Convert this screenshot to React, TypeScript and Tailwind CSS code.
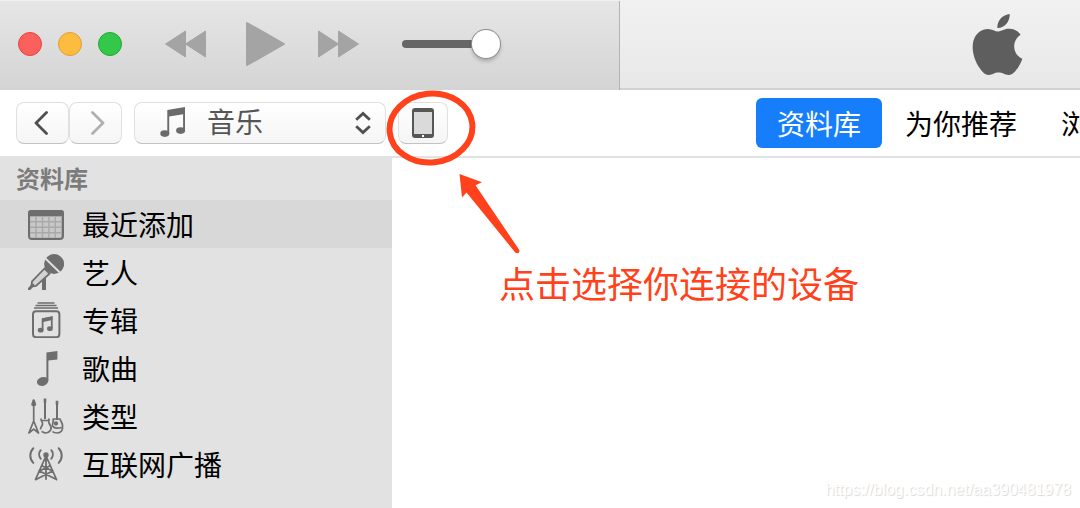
import type { ReactNode } from "react";
import { SiApple } from "react-icons/si";

const RecentIcon = () => (
  <svg viewBox="0 0 36 36" className="size-9" aria-hidden="true">
    <rect x="1" y="5" width="34" height="28" rx="3" fill="#a9a9a9" stroke="#6e6e6e" strokeWidth="2" />
    <path d="M0 10V7a3 3 0 0 1 3-3h30a3 3 0 0 1 3 3v3z" fill="#6e6e6e" />
    {[11, 16.5, 22, 27.5].map((y) =>
      [2.3, 8.8, 15.2, 21.6, 28].map((x) => (
        <rect key={`${x}-${y}`} x={x} y={y} width="5" height="4" fill="#c8c8c8" />
      )),
    )}
  </svg>
);

const ArtistIcon = () => (
  <svg viewBox="0 0 36 36" className="size-9" aria-hidden="true">
    <path d="M14 23.5l4-4V36h-4z" fill="#6e6e6e" />
    <path d="M16.5 14.5L4 27.5l-.6 4.9 4.6-.6L21.5 19.6z" fill="#d3d3d3" stroke="#6e6e6e" strokeWidth="1.8" />
    <path d="M4.8 31.2L1.4 34.8" stroke="#6e6e6e" strokeWidth="3" strokeLinecap="round" />
    <circle cx="26.1" cy="10" r="10" fill="#6e6e6e" />
    <path d="M17.2 4.2L32.4 19" stroke="#e2e2e2" strokeWidth="1.9" />
  </svg>
);

const AlbumIcon = () => (
  <svg viewBox="0 0 36 36" className="size-9" fill="none" stroke="#6e6e6e" aria-hidden="true">
    <path d="M9.5 1h17M7.5 3.5h21M6 6h24" strokeWidth="1.5" />
    <rect x="5" y="9.2" width="26.4" height="26" rx="3" strokeWidth="2" />
    <path d="M14.6 27.5V17.4l9.2-2.1V26" strokeWidth="1.8" />
    <path d="M14 16.200l10.500-2v3.900l-10.500 2.100z" fill="#6e6e6e" stroke="none" />
    <ellipse cx="12.7" cy="28.2" rx="2.9" ry="2.4" fill="#6e6e6e" stroke="none" />
    <ellipse cx="21.9" cy="26.7" rx="2.9" ry="2.4" fill="#6e6e6e" stroke="none" />
  </svg>
);

const SongIcon = () => (
  <svg viewBox="0 0 36 36" className="size-9" fill="#6e6e6e" aria-hidden="true">
    <path d="M18.4 2.4l11-1.4v8.6l-9 1v20.4h-2z" />
    <ellipse cx="14.6" cy="31.4" rx="5.7" ry="4.4" transform="rotate(-15 14.6 31.4)" />
  </svg>
);

const GenreIcon = () => (
  <svg viewBox="0 0 36 36" className="size-9" fill="none" stroke="#6e6e6e" strokeWidth="1.7" strokeLinejoin="round" aria-hidden="true">
    <path d="M5.7 3v20L.9 35l4.800-3.800L10.500 35 5.700 23" />
    <path d="M5.700 2.600l-1.200 4h2.400zM17 .6v4M29 2.800v4" strokeWidth="2.6" />
    <path d="M17 3v18M29 5v17" strokeWidth="2" />
    <path d="M13 20.500c-.3 3 2.200 3.500 1.500 6-.6 2.200-2 2.500-2 5M21.200 20.500c-1.400 3.200-.4 4.700 1 6.800 2.500 3.800-.7 7.700-4.500 7.700-1.500 0-2.700-1.200-4.200-1.500M14 22.500h6" />
    <path d="M32 20.500c.2 3 2.800 4 2.500 7.500.6 4-1.500 7-5.200 7-2 0-4-.6-4.800-1.500M25 20.500c1 3.500-.8 4.500-.5 7.500 1.500 2.500 5 2.500 9 1.500M25 21h7" />
    <circle cx="28" cy="25.500" r="1.300" fill="#6e6e6e" />
  </svg>
);

const RadioIcon = () => (
  <svg viewBox="0 0 36 36" className="size-9" fill="none" stroke="#6e6e6e" strokeWidth="1.8" strokeLinecap="round" aria-hidden="true">
    <circle cx="18" cy="9" r="1.800" fill="#6e6e6e" />
    <path d="M18 9v24M17.500 11L7.500 33.500M18.500 11l10 22.500M14.500 20l10 5L8 33.500M21.500 20l-10 5 17 8.500" />
    <path d="M12.700 4.200c-2 2.400-2 6.100 0 8.500M23.300 4.200c2 2.400 2 6.100 0 8.500" strokeWidth="2" />
    <path d="M5.300 2.200c-4 4-4 10.700 0 14.700M30.700 2.200c4 4 4 10.700 0 14.700" strokeWidth="2" />
  </svg>
);

const library = [
  { label: "最近添加", icon: <RecentIcon />, active: true },
  { label: "艺人", icon: <ArtistIcon /> },
  { label: "专辑", icon: <AlbumIcon /> },
  { label: "歌曲", icon: <SongIcon /> },
  { label: "类型", icon: <GenreIcon /> },
  { label: "互联网广播", icon: <RadioIcon /> },
];

const tabs = ["资料库", "为你推荐", "浏览"];

const buttonBox =
  "flex h-[42px] items-center justify-center rounded-lg border border-[#e0e0e0] border-b-[#c2c2c2] bg-gradient-to-b from-white to-[#f5f5f5]";

function PlayerButton({ label, children }: { label: string; children: ReactNode }) {
  return (
    <button type="button" aria-label={label} className="text-[#a4a4a4]">
      {children}
    </button>
  );
}

function TitleBar() {
  return (
    <header className="flex h-[90px] flex-none border-t border-[#f0f0f0] bg-gradient-to-b from-[#e6e6e6] to-[#d4d4d4]">
      <div className="flex w-[620px] flex-none items-center border-r border-[#b4b4b4] pb-1 pl-[18px]">
        <div className="flex gap-4">
          <button type="button" aria-label="关闭" className="size-6 rounded-full border border-[#e2463f] bg-[#fc605c]" />
          <button type="button" aria-label="最小化" className="size-6 rounded-full border border-[#dfa02f] bg-[#fdbc40]" />
          <button type="button" aria-label="全屏" className="size-6 rounded-full border border-[#24a732] bg-[#34c84a]" />
        </div>
        <div className="ml-[43px] flex items-center">
          <PlayerButton label="上一首">
            <svg viewBox="0 0 41 28" className="h-7 w-[41px]" fill="currentColor" stroke="currentColor" strokeLinejoin="round">
              <path d="M.5 14L20.500 1v26zM20.500 14l20-13v26z" />
            </svg>
          </PlayerButton>
          <PlayerButton label="播放">
            <svg viewBox="0 0 39 44" className="ml-10 h-11 w-[39px]" fill="currentColor" stroke="currentColor" strokeWidth="2" strokeLinejoin="round">
              <path d="M1 1l37 21L1 43z" />
            </svg>
          </PlayerButton>
          <PlayerButton label="下一首">
            <svg viewBox="0 0 41 28" className="ml-[33px] h-7 w-[41px]" fill="currentColor" stroke="currentColor" strokeLinejoin="round">
              <path d="M.5 1l20 13-20 13zM20.500 1l20 13-20 13z" />
            </svg>
          </PlayerButton>
        </div>
        <input
          type="range"
          aria-label="音量"
          defaultValue={100}
          className="ml-[43px] h-7 w-[98px] appearance-none bg-transparent [&::-webkit-slider-runnable-track]:h-2 [&::-webkit-slider-runnable-track]:rounded-full [&::-webkit-slider-runnable-track]:bg-[#666] [&::-webkit-slider-thumb]:-mt-2.5 [&::-webkit-slider-thumb]:size-7 [&::-webkit-slider-thumb]:appearance-none [&::-webkit-slider-thumb]:rounded-full [&::-webkit-slider-thumb]:bg-white [&::-webkit-slider-thumb]:shadow-[0_0_0_1px_#8e8e8e,0_3px_4px_#00000040]"
        />
      </div>
      <div className="flex flex-1 items-center justify-end border-b-2 border-[#d2d2d2] bg-gradient-to-b from-[#f1f1f1] to-[#e8e8e8] pr-[52px]">
        <SiApple className="size-[61px] text-[#5e5e5e]" aria-hidden="true" />
      </div>
    </header>
  );
}

function Toolbar() {
  return (
    <div className="flex h-[68px] flex-none items-center border-b-2 border-[#e2e2e2] bg-white pl-4">
      <button type="button" aria-label="后退" className={`${buttonBox} w-[53px]`}>
        <svg viewBox="0 0 14 24" className="mr-1 h-6 w-3.5" fill="none" stroke="#4f4f4f" strokeWidth="2.8" strokeLinecap="round" strokeLinejoin="round">
          <path d="M12.500 1.500L2 12l10.500 10.500" />
        </svg>
      </button>
      <button type="button" aria-label="前进" className={`${buttonBox} w-[53px]`}>
        <svg viewBox="0 0 14 24" className="ml-1 h-6 w-3.5" fill="none" stroke="#b0b0b0" strokeWidth="2.8" strokeLinecap="round" strokeLinejoin="round">
          <path d="M1.500 1.500L12 12 1.500 22.500" />
        </svg>
      </button>
      <div className="relative ml-3 w-[252px] flex-none">
        <select
          aria-label="媒体类型"
          className={`${buttonBox} w-full appearance-none pb-1 pl-[72px] text-[28px] leading-9 text-[#555]`}
        >
          <option>音乐</option>
        </select>
        <svg viewBox="0 0 26 30" className="pointer-events-none absolute top-[5px] left-[26px] h-[30px] w-[26px]" fill="#6b6b6b">
          <path d="M7.300 3L25 0v23.500h-1.900V7.300L9.200 9.400v17.300H7.300z" />
          <ellipse cx="4.800" cy="26.600" rx="4.500" ry="3.300" />
          <ellipse cx="20.600" cy="23.600" rx="4.500" ry="3.300" />
        </svg>
        <svg viewBox="0 0 16 24" className="pointer-events-none absolute top-[9px] right-[15px] h-6 w-4" fill="none" stroke="#4f4f4f" strokeWidth="2.8">
          <path d="M1.200 8.800L8 2.400l6.800 6.400M1.200 15.200L8 21.600l6.800-6.400" />
        </svg>
      </div>
      <div className="relative ml-3 flex-none">
        <button type="button" aria-label="设备" className={`${buttonBox} w-[50px]`}>
          <svg viewBox="0 0 22 30" className="h-[30px] w-[22px]">
            <rect width="22" height="30" rx="3" fill="#575757" />
            <path d="M2 4h18v22H2z" fill="#dadada" />
            <path d="M10 27h2v2h-2z" fill="#fff" />
          </svg>
        </button>
        <svg viewBox="0 0 90 78" className="pointer-events-none absolute -top-3 -left-3 h-[78px] w-[90px] max-w-none" fill="none" stroke="#ff421b" strokeWidth="6">
          <ellipse cx="45" cy="38" rx="41.500" ry="34.500" transform="rotate(-6 45 38)" />
        </svg>
      </div>
      <nav className="ml-auto flex w-[324px] flex-none gap-0.5 overflow-hidden">
        {tabs.map((tab, i) => (
          <a
            key={tab}
            href="#"
            className={`flex-none rounded-md px-[21px] text-[28px] leading-[50px] ${i === 0 ? "bg-[#167efb] text-white" : "text-black"}`}
          >
            {tab}
          </a>
        ))}
      </nav>
    </div>
  );
}

function Sidebar() {
  return (
    <aside className="w-[392px] flex-none bg-[#e2e2e2]">
      <h2 className="pl-4 text-2xl leading-10 font-bold text-[#7b7b7b] pb-0.5">资料库</h2>
      <ul>
        {library.map(({ label, icon, active }) => (
          <li key={label}>
            <a
              href="#"
              className={`flex h-12 items-center gap-[18px] pl-7 text-[28px] leading-[48px] text-black ${active ? "bg-[#d8d8d8]" : ""}`}
            >
              {icon}
              {label}
            </a>
          </li>
        ))}
      </ul>
    </aside>
  );
}

export default function App() {
  return (
    <div className="flex min-h-screen flex-col overflow-hidden bg-white font-['Noto_Sans_CJK_SC',sans-serif]">
      <TitleBar />
      <Toolbar />
      <div className="flex flex-1">
        <Sidebar />
        <main className="flex flex-1 flex-col pt-4">
          {/* arrow up to the device button */}
          <svg viewBox="0 0 62 80" className="ml-[67px] h-20 w-[62px]" fill="#ff421b" aria-hidden="true">
            <path d="M.5 0L23 8.300l-6.500 3L60.300 76c1 2.500-2.300 4.500-4.300 2.200L7.500 18.500 3 23.500z" />
          </svg>
          <p className="ml-[107px] text-[36px] leading-[56px] text-[#ff421b]">点击选择你连接的设备</p>
          <p className="mt-auto mr-[9px] mb-1.5 self-end font-['Liberation_Sans',sans-serif] text-base leading-6 text-white [text-shadow:1px_1px_1px_#d8d8d8]">
            https://blog.csdn.net/aa390481978
          </p>
        </main>
      </div>
    </div>
  );
}
